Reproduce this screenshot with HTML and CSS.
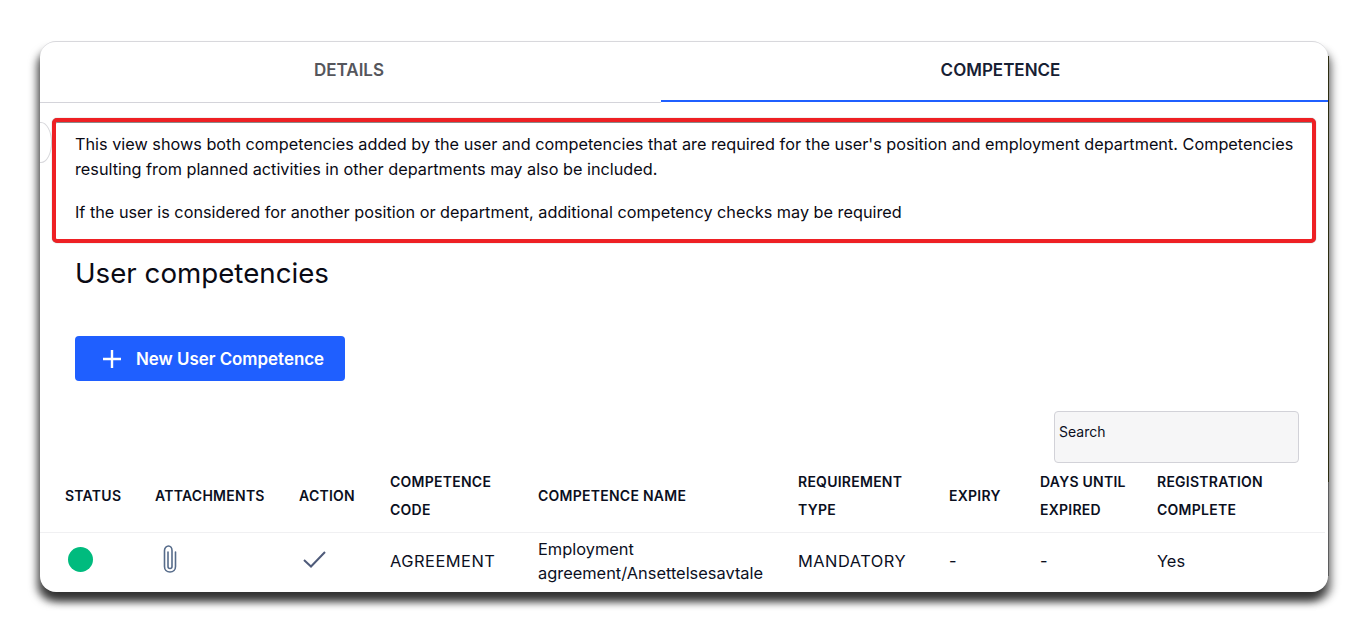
FILE: index.html
```html
<!DOCTYPE html>
<html lang="en">
<head>
<meta charset="utf-8">
<title>User competencies</title>
<link rel="stylesheet" href="styles.css">
</head>
<body>
<div class="frame">
<span class="edge-line"></span>
<main class="card">
  <nav class="tabs">
    <div class="tab">DETAILS</div>
    <div class="tab active">COMPETENCE</div>
  </nav>
  <div class="content">
    <span class="stub-circle"></span>
    <section class="notice">
      <p>This view shows both competencies added by the user and competencies that are required for the user's position and employment department. Competencies resulting from planned activities in other departments may also be included.</p>
      <p>If the user is considered for another position or department, additional competency checks may be required</p>
    </section>
    <h1 class="title">User competencies</h1>
    <button class="new-btn" type="button">
      <svg class="plus" width="18" height="18" viewBox="0 0 18 18" aria-hidden="true"><path d="M9 0v18M0 9h18" stroke="#fff" stroke-width="2.400" fill="none"/></svg>
      <span>New User Competence</span>
    </button>
    <div class="search-row"><div class="search">Search</div></div>
  </div>
  <div class="table">
    <div class="row head">
      <div>STATUS</div><div>ATTACHMENTS</div><div>ACTION</div><div>COMPETENCE<br>CODE</div><div>COMPETENCE NAME</div><div>REQUIREMENT<br>TYPE</div><div>EXPIRY</div><div>DAYS UNTIL<br>EXPIRED</div><div>REGISTRATION<br>COMPLETE</div>
    </div>
    <div class="row body">
      <div><span class="dot"></span></div>
      <div>
        <svg class="clip" width="16" height="28" viewBox="0 0 16 28" aria-hidden="true"><path d="M6 7v14.500c0 1.200.8 2 2 2s2-.8 2-2V5.500C10 3 8.500 1 6.500 1S2.500 3 2.500 5.500v16c0 3.200 2.200 5.500 5.500 5.500s5.500-2.300 5.500-5.500V7" fill="none" stroke="#566b8a" stroke-width="1.600" stroke-linecap="round"/></svg>
      </div>
      <div>
        <svg class="check" width="24" height="18" viewBox="0 0 24 18" aria-hidden="true"><path d="M1 9l7 6.500L22 1" fill="none" stroke="#4f5b7a" stroke-width="2"/></svg>
      </div>
      <div class="caps">AGREEMENT</div>
      <div>Employment<br>agreement/Ansettelsesavtale</div>
      <div class="caps">MANDATORY</div>
      <div>-</div>
      <div>-</div>
      <div>Yes</div>
    </div>
  </div>
</main>
</div>
</body>
</html>
```
FILE: styles.css
```css
* { box-sizing: border-box; }
html, body { margin: 0; height: 632px; overflow: hidden; background: #fff; }
body {
  padding: 41px 40px 0;
  font-family: Inter, "Liberation Sans", sans-serif;
  color: #0b0f1e;
}
.frame { position: relative; width: 1288px; height: 551px; }
.card {
  width: 1288px;
  height: 551px;
  background: #fff;
  border-top: 1px solid #d8d8dc;
  border-radius: 16px;
  box-shadow: -3px 9px 9px rgba(0,0,0,.65), 4px 9px 9px rgba(0,0,0,.45);
  overflow: hidden;
}
.edge-line {
  position: absolute; top: 15px; right: -1px; bottom: 16px; width: 1px;
  background: linear-gradient(#2c2c10 0 82%, #5c5c5c 82% 100%);
}
.tabs {
  display: grid;
  grid-template-columns: 621px 667px;
  height: 61px;
  align-items: start;
}
.tab {
  display: flex; align-items: center; justify-content: center;
  height: 61px;
  padding: 0 3px 5px 0;
  border-bottom: 1px solid #d4d4da;
  font-size: 17px; font-weight: 600; color: #55565c;
}
.tab.active { height: 60px; padding: 0 0 3px 12px; color: #172033; border-bottom: 2px solid #1f5fff; }
.content { position: relative; padding: 15px 12px 0; }
.stub-circle {
  position: absolute; left: -10px; top: 19px; width: 22px; height: 41px;
  border: 1px solid #d8d8dc; border-radius: 50%;
}
.notice {
  position: relative;
  height: 125px;
  padding: 10px 10px 0 19px;
  background: #fff;
  border: 4px solid #ee2024;
  border-radius: 5px;
  box-shadow: 0 0 1px rgba(0,0,0,.5), inset 0 1px 0 #8a8a8a;
  font-size: 16.260px; line-height: 25px;
  color: #0a0a14;
}
.notice p { margin: 0 0 18px; }
.title { margin: 12px 0 0 23px; font-size: 27.700px; line-height: 36px; font-weight: 400; color: #0a0a14; }
.new-btn {
  display: flex; align-items: center; gap: 15px;
  width: 270px; height: 45px; margin: 45px 0 0 23px; padding: 0 0 0 28px;
  background: #1f5fff; border: 0; border-radius: 4px;
  font-family: inherit; font-size: 16.900px; font-weight: 600; color: #fff;
}
.search-row { display: flex; justify-content: flex-end; margin: 30px 17px 0 0; }
.search {
  width: 245px; height: 52px; padding: 11px 0 0 4px;
  background: #f6f6f7; border: 1px solid #d2d2d8; border-radius: 4px;
  font-size: 14px; line-height: 17px;
}
.row {
  display: grid;
  grid-template-columns: 90px 144px 91px 148px 260px 151px 91px 117px 1fr;
  align-items: center;
  margin-right: 3px;
  padding-left: 25px;
}
.head {
  height: 70px; padding-bottom: 4px;
  border-bottom: 1px solid #f0f0f2;
  font-size: 14px; font-weight: 600; line-height: 28px; letter-spacing: .25px;
}
.body { height: 56px; font-size: 16.400px; line-height: 24px; }
.caps { letter-spacing: .5px; }
.dot { display: block; width: 25px; height: 25px; margin: -4px 0 0 3px; border-radius: 50%; background: #00bb7e; }
.clip { display: block; margin: -4px 0 0 7px; }
.check { display: block; margin: -2px 0 0 4px; }
```
